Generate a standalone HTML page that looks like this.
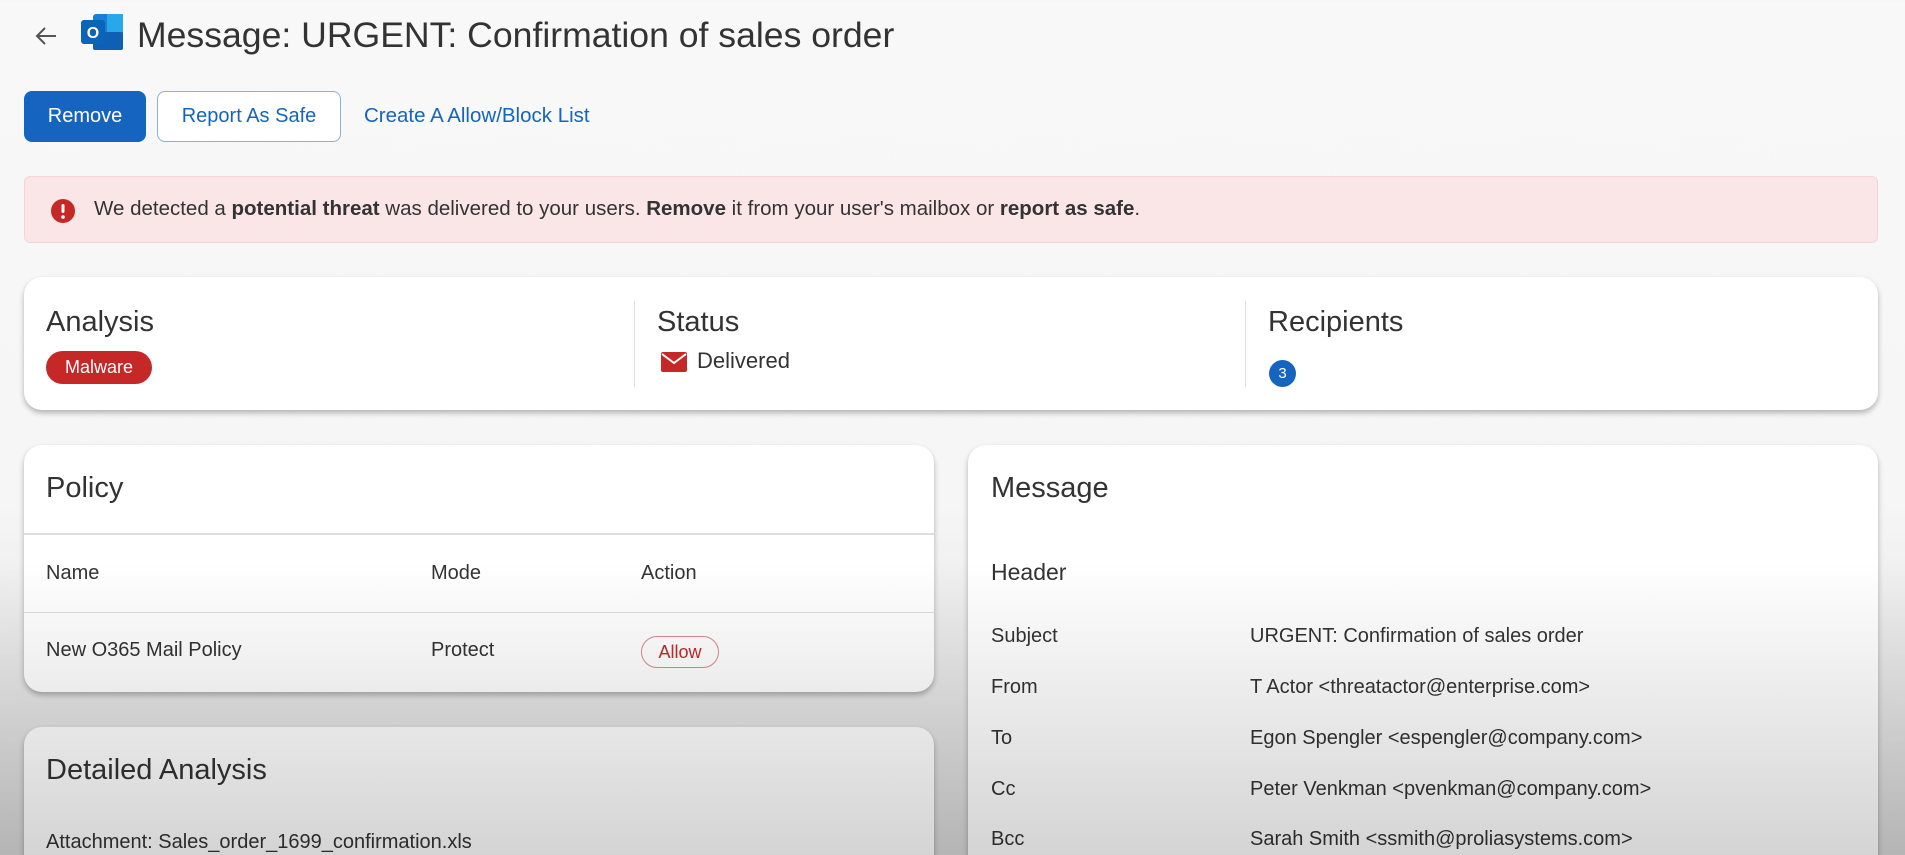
<!DOCTYPE html>
<html><head><meta charset="utf-8"><style>
*{box-sizing:border-box;margin:0;padding:0}
html{width:1905px;height:855px;overflow:hidden}
body{width:1905px;height:855px;overflow:hidden;position:relative;font-family:"Liberation Sans",sans-serif;color:#333;background:linear-gradient(#f8f8f8 0,#f6f6f6 500px,#d9d9d9 855px)}
.a{position:absolute;white-space:nowrap}
.card{position:absolute;background:#fff;border-radius:18px;box-shadow:0 3px 6px rgba(0,0,0,.28)}
.btn{position:absolute;border-radius:8px;font-size:20px;display:flex;align-items:center;justify-content:center}
.h{font-size:29px;color:#333}
.t{font-size:20px;color:#333}
.b{font-weight:bold}
.ov{position:absolute;left:0;top:0;width:1905px;height:855px;pointer-events:none;background:linear-gradient(rgba(0,0,0,0) 0,rgba(0,0,0,0) 560px,rgba(0,0,0,.17) 855px)}
</style></head><body>
<svg class="a" style="left:32px;top:22px" width="28" height="28" viewBox="0 0 28 28"><path d="M24 14H5M13 6l-8 8 8 8" fill="none" stroke="#555" stroke-width="2"/></svg>
<svg class="a" style="left:79px;top:12px" width="46" height="42" viewBox="0 0 46 42">
<rect x="14" y="2" width="30" height="36" rx="3" fill="#1a7fd4"/><rect x="28" y="2" width="16" height="18" fill="#28a8ea"/><rect x="14" y="20" width="30" height="18" rx="2" fill="#0f5fb5"/>
<rect x="2" y="8" width="24" height="24" rx="3" fill="#0a64b8"/><text x="14" y="26" font-size="16" font-weight="bold" fill="#fff" text-anchor="middle" font-family="Liberation Sans">O</text></svg>
<div class="a" style="left:137px;top:15px;font-size:35.6px;color:#333">Message: URGENT: Confirmation of sales order</div>

<div class="btn" style="left:24px;top:91px;width:122px;height:51px;background:#1565c0;color:#fff">Remove</div>
<div class="btn" style="left:157px;top:91px;width:184px;height:51px;border:1px solid #8ab0db;color:#1565c0;background:#fff">Report As Safe</div>
<div class="a" style="left:364px;top:104px;font-size:20.5px;color:#1565c0">Create A Allow/Block List</div>

<div class="a" style="left:24px;top:176px;width:1854px;height:67px;background:#fbe6e7;border-radius:6px;border:1px solid #f4d4d6"></div>
<svg class="a" style="left:50px;top:198px" width="26" height="26" viewBox="0 0 26 26"><circle cx="13" cy="13" r="12" fill="#c62828"/><rect x="11.5" y="6" width="3" height="9" rx="1.5" fill="#fff"/><circle cx="13" cy="19" r="1.8" fill="#fff"/></svg>
<div class="a" style="left:94px;top:197px;font-size:20.5px;color:#333">We detected a <span class="b">potential threat</span> was delivered to your users. <span class="b">Remove</span> it from your user's mailbox or <span class="b">report as safe</span>.</div>

<div class="card" style="left:24px;top:277px;width:1854px;height:133px"></div>
<div class="a h" style="left:46px;top:306px">Analysis</div>
<div class="a" style="left:46px;top:351px;width:106px;height:33px;border-radius:17px;background:#c62828;color:#fff;font-size:18px;text-align:center;line-height:33px">Malware</div>
<div class="a" style="left:634px;top:301px;width:1px;height:86px;background:#ddd"></div>
<div class="a h" style="left:657px;top:306px">Status</div>
<svg class="a" style="left:661px;top:352px" width="26" height="20" viewBox="0 0 26 20"><rect width="26" height="20" rx="2" fill="#c62828"/><path d="M1 2l12 9 12-9" fill="none" stroke="#fff" stroke-width="2"/></svg>
<div class="a" style="left:697px;top:348px;font-size:22px;color:#333">Delivered</div>
<div class="a" style="left:1245px;top:301px;width:1px;height:86px;background:#ddd"></div>
<div class="a h" style="left:1268px;top:306px">Recipients</div>
<div class="a" style="left:1269px;top:360px;width:27px;height:27px;border-radius:50%;background:#1565c0;color:#fff;font-size:15px;text-align:center;line-height:27px">3</div>

<div class="card" style="left:24px;top:445px;width:910px;height:247px"></div>
<div class="a h" style="left:46px;top:472px">Policy</div>
<div class="a" style="left:24px;top:533px;width:910px;height:2px;background:#ddd"></div>
<div class="a t" style="left:46px;top:562px">Name</div>
<div class="a t" style="left:431px;top:562px">Mode</div>
<div class="a t" style="left:641px;top:562px">Action</div>
<div class="a" style="left:24px;top:612px;width:910px;height:1px;background:#ddd"></div>
<div class="a t" style="left:46px;top:639px">New O365 Mail Policy</div>
<div class="a t" style="left:431px;top:639px">Protect</div>
<div class="a" style="left:641px;top:636px;width:78px;height:32px;border:1px solid #d98a90;border-radius:16px;color:#c62828;font-size:18px;text-align:center;line-height:30px">Allow</div>

<div class="card" style="left:24px;top:727px;width:910px;height:150px"></div>
<div class="a h" style="left:46px;top:754px">Detailed Analysis</div>
<div class="a t" style="left:46px;top:831px">Attachment: Sales_order_1699_confirmation.xls</div>

<div class="card" style="left:968px;top:445px;width:910px;height:430px"></div>
<div class="a h" style="left:991px;top:472px">Message</div>
<div class="a" style="left:991px;top:559px;font-size:23px">Header</div>
<div class="a t" style="left:991px;top:625px">Subject</div>
<div class="a t" style="left:1250px;top:625px">URGENT: Confirmation of sales order</div>
<div class="a t" style="left:991px;top:676px">From</div>
<div class="a t" style="left:1250px;top:676px">T Actor &lt;threatactor@enterprise.com&gt;</div>
<div class="a t" style="left:991px;top:727px">To</div>
<div class="a t" style="left:1250px;top:727px">Egon Spengler &lt;espengler@company.com&gt;</div>
<div class="a t" style="left:991px;top:778px">Cc</div>
<div class="a t" style="left:1250px;top:778px">Peter Venkman &lt;pvenkman@company.com&gt;</div>
<div class="a t" style="left:991px;top:828px">Bcc</div>
<div class="a t" style="left:1250px;top:828px">Sarah Smith &lt;ssmith@proliasystems.com&gt;</div>
<div class="ov"></div>
</body></html>
